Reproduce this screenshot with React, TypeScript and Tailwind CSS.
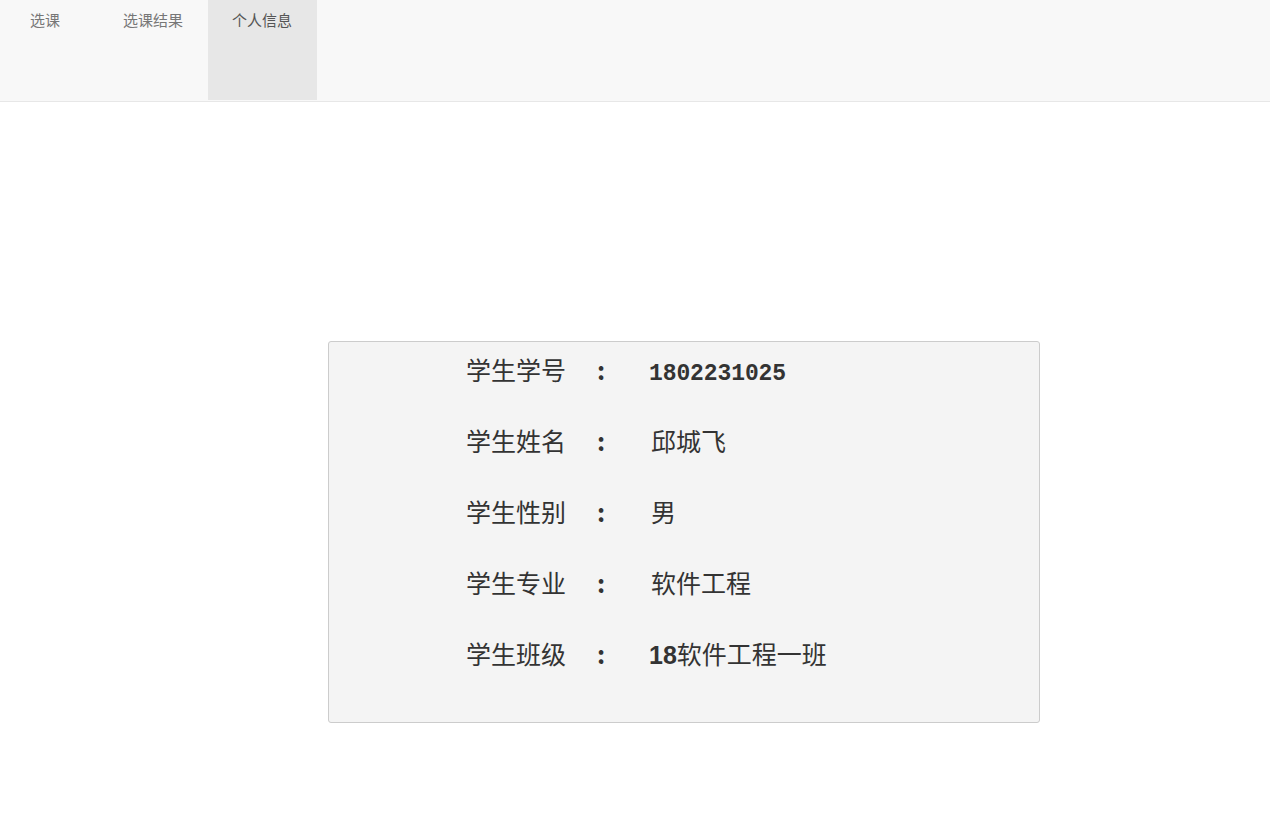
import React from "react";

const tabs = [
  { label: "选课", w: "w-[99px]", pl: "pl-[30px]", active: false },
  { label: "选课结果", w: "w-[109px]", pl: "pl-[24px]", active: false },
  { label: "个人信息", w: "w-[109px]", pl: "pl-[24px]", active: true },
];

const cjk = "font-['Noto_Sans_CJK_SC',sans-serif]";

export default function App() {
  const rows: { label: string; value: React.ReactNode }[] = [
    {
      label: "学生学号",
      value: (
        <span className="font-['Liberation_Mono',monospace] text-[23px] font-bold tracking-[-0.1px]">
          1802231025
        </span>
      ),
    },
    { label: "学生姓名", value: <span className="pl-[2px]">邱城飞</span> },
    { label: "学生性别", value: <span className="pl-[2px]">男</span> },
    { label: "学生专业", value: <span className="pl-[2px]">软件工程</span> },
    {
      label: "学生班级",
      value: (
        <span>
          <span className="font-['Liberation_Sans',sans-serif] text-[25px] font-bold">18</span>
          软件工程一班
        </span>
      ),
    },
  ];

  return (
    <div className={`min-h-[823px] w-full bg-white ${cjk}`}>
      <nav className="flex h-[102px] border-b border-[#e7e7e7] bg-[#f8f8f8]">
        {tabs.map((t) => (
          <div
            key={t.label}
            className={`${t.w} ${t.pl} h-[100px] pt-[10px] text-[15px] leading-[20px] ${
              t.active ? "bg-[#e7e7e7] text-[#555]" : "text-[#777]"
            }`}
          >
            {t.label}
          </div>
        ))}
      </nav>

      <div className="ml-[328px] mt-[239px] w-[712px] rounded-[3px] border border-[#cccccc] bg-[#f4f4f4] pb-[25px] pl-[137px] text-[#333]">
        {rows.map((r, i) => (
          <div
            key={r.label}
            className={`flex h-[71px] text-[25px] leading-[54px] ${i === 0 ? "" : ""}`}
          >
            <span className="w-[131px]">{r.label}</span>
            <span className="w-[52px] font-bold">:</span>
            <span>{r.value}</span>
          </div>
        ))}
      </div>
    </div>
  );
}
